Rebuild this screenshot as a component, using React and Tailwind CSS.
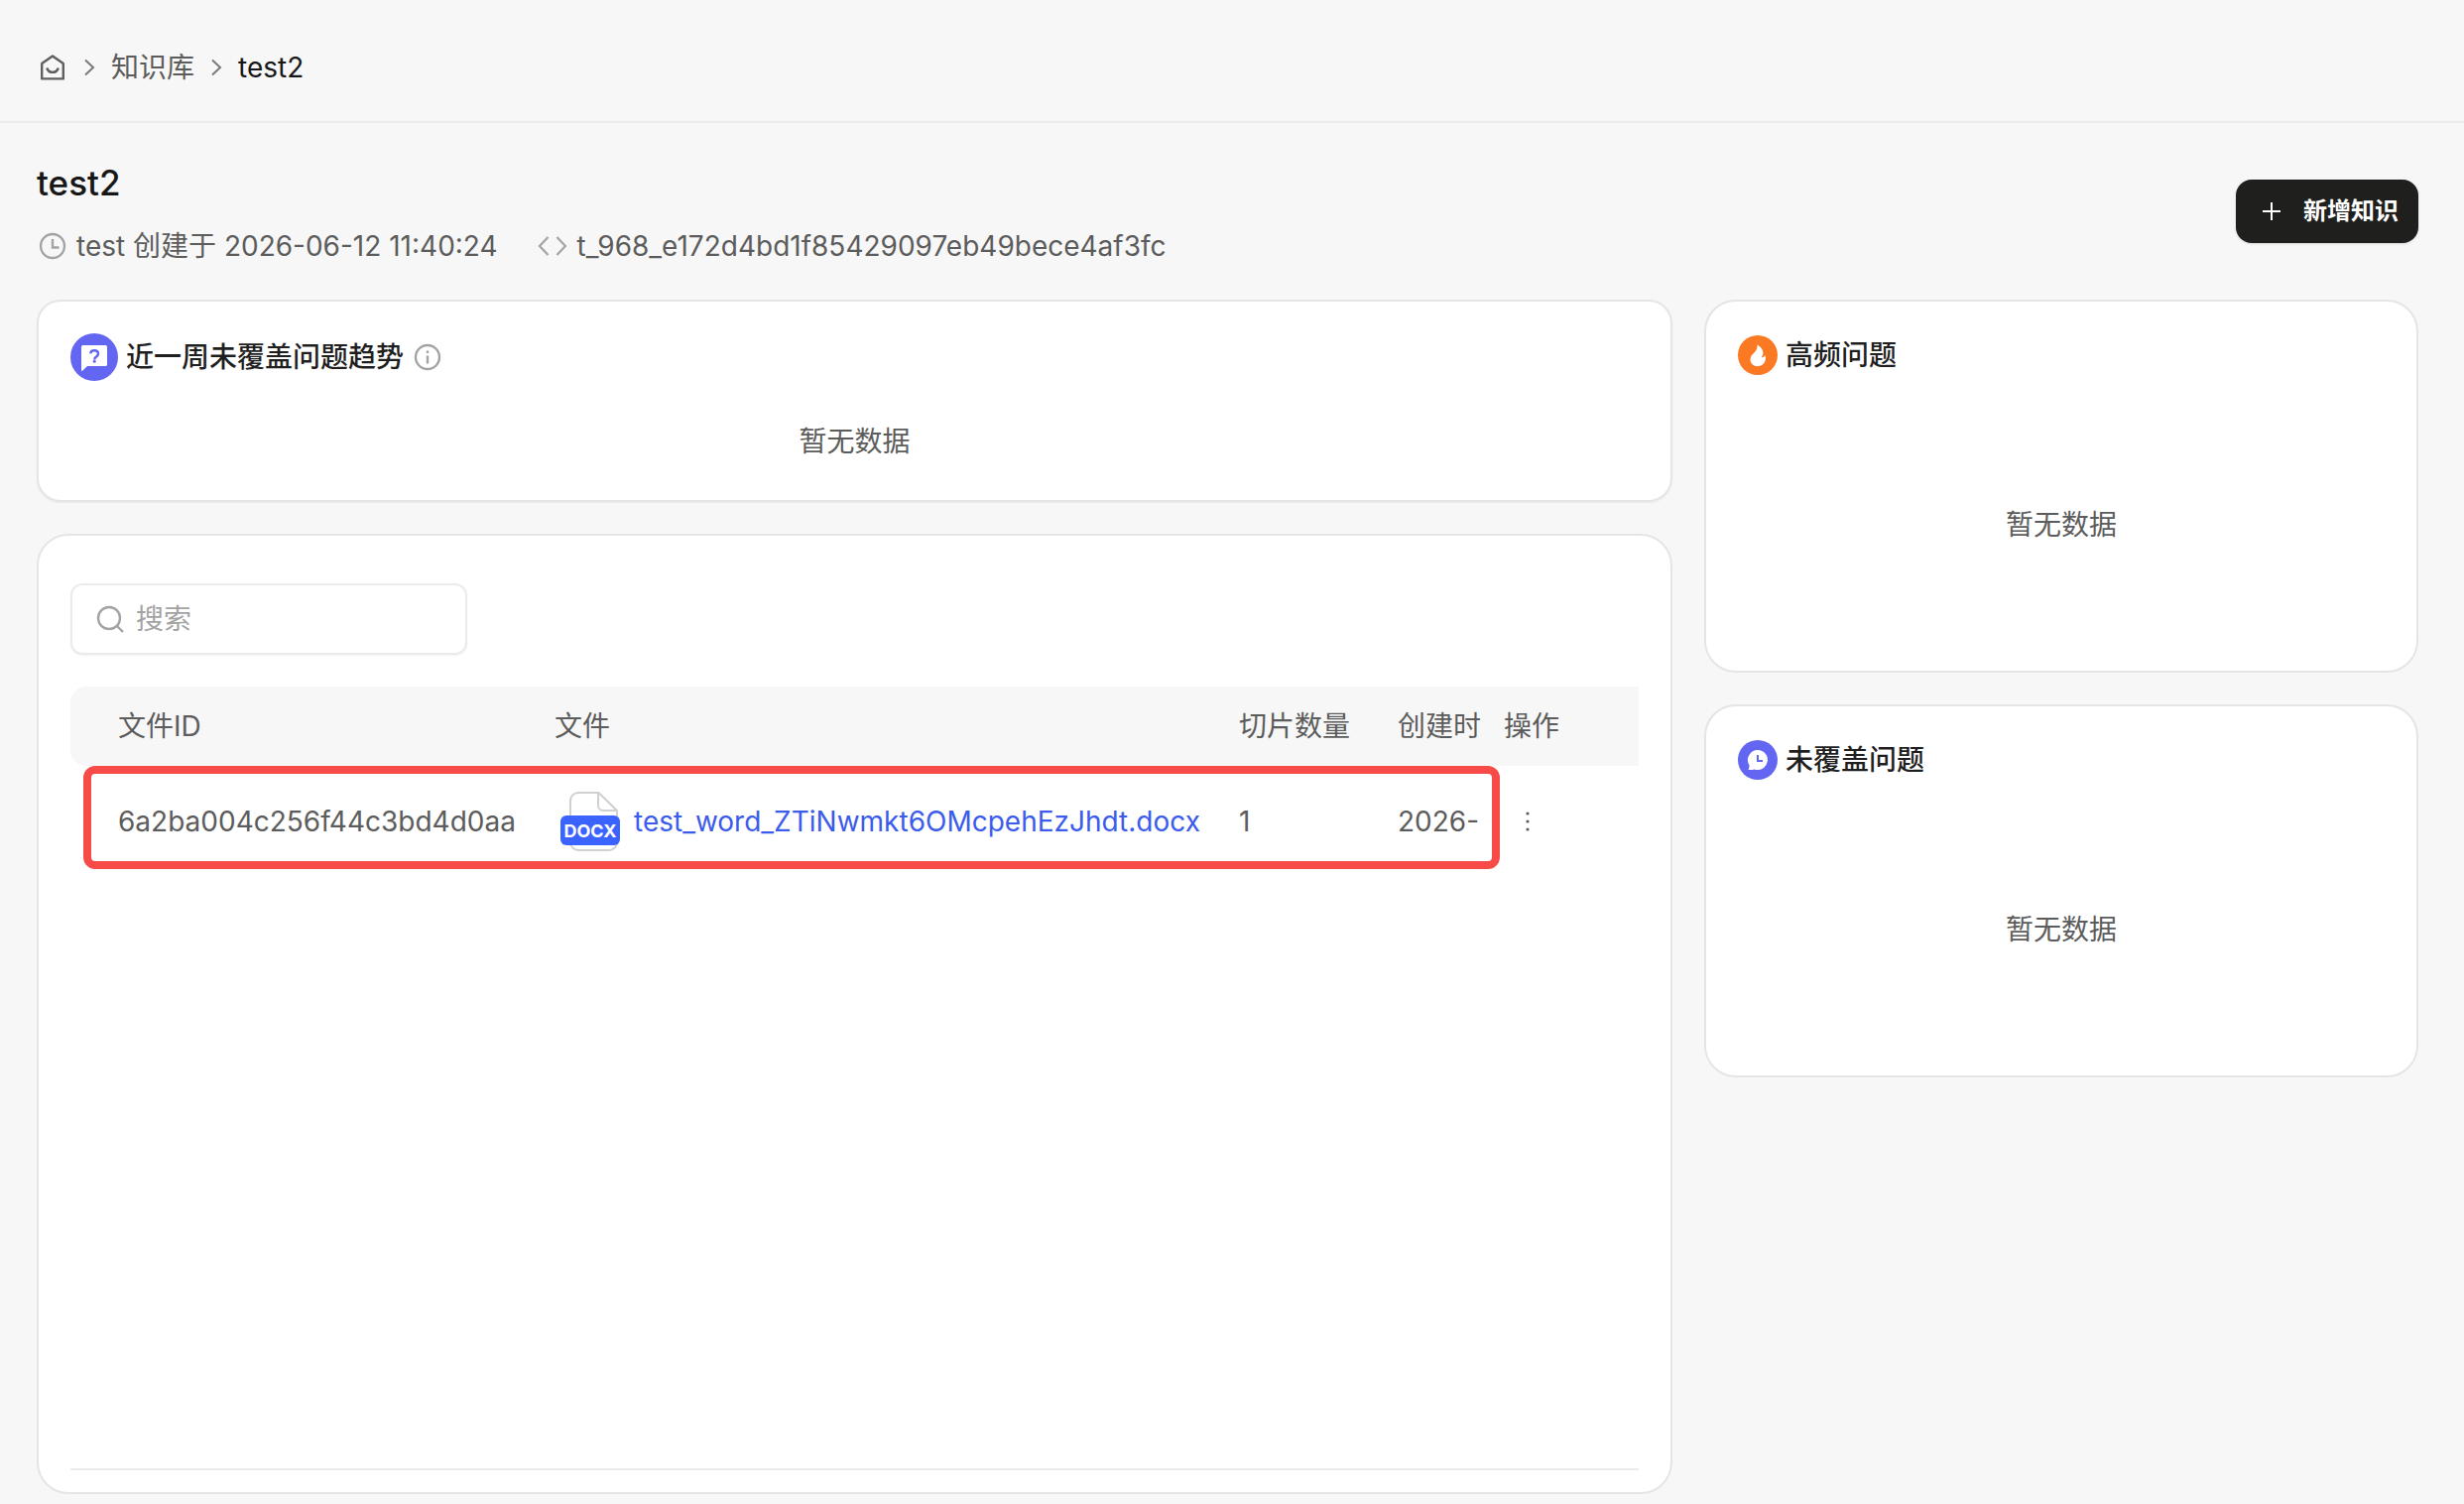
import { useState } from "react";

const files = [
  {
    id: "6a2ba004c256f44c3bd4d0aa",
    name: "test_word_ZTiNwmkt6OMcpehEzJhdt.docx",
    slices: 1,
    created: "2026-",
  },
];

function HomeIcon() {
  return (
    <svg width="26" height="28" viewBox="0 0 26 28" fill="none" stroke="#5f5f5f" strokeWidth="2.4">
      <path d="M2.2 10 13 2.4 23.8 10v15.4H2.2z" strokeLinejoin="round" />
      <path d="M7.2 14.5c1 3 3 4.4 5.8 4.4s4.8-1.4 5.8-4.4" />
    </svg>
  );
}

function ChevronIcon() {
  return (
    <svg width="12" height="18" viewBox="0 0 12 18" fill="none" stroke="#7a7a7a" strokeWidth="2">
      <path d="m2 1.5 8 7.5-8 7.5" />
    </svg>
  );
}

function ClockIcon() {
  return (
    <svg width="28" height="28" viewBox="0 0 28 28" fill="none" stroke="#a3a3a3" strokeWidth="2.4">
      <circle cx="14" cy="14" r="12" />
      <path d="M14 7v8.500h6.500" />
    </svg>
  );
}

function CodeIcon() {
  return (
    <svg width="30" height="20" viewBox="0 0 30 20" fill="none" stroke="#a3a3a3" strokeWidth="2.2">
      <path d="M10.5 1 2 10l8.5 9M19.5 1 28 10l-8.500 9" />
    </svg>
  );
}

function QuestionIcon() {
  return (
    <svg width="48" height="48" viewBox="0 0 48 48">
      <circle cx="24" cy="24" r="24" fill="#6366f1" />
      <path d="M12.5 12h23a1.5 1.5 0 0 1 1.5 1.5v18a1.5 1.5 0 0 1-1.5 1.5H17l-4.600 4.600c-.6.600-1.400.2-1.400-.6V13.500a1.500 1.500 0 0 1 1.500-1.500z" fill="#fff" />
      <path d="M20.2 20.4c.2-2 1.7-3.2 3.9-3.2 2.3 0 3.9 1.3 3.9 3.3 0 1.500-.7 2.300-1.900 3.100-1.300.9-1.900 1.500-1.900 3" fill="none" stroke="#6366f1" strokeWidth="2.4" />
      <circle cx="24.2" cy="28.2" r="1.5" fill="#6366f1" />
    </svg>
  );
}

function InfoIcon() {
  return (
    <svg width="28" height="28" viewBox="0 0 28 28" fill="none" stroke="#a3a3a3" strokeWidth="2.4">
      <circle cx="14" cy="14" r="12" />
      <path d="M14 12.5v8M14 7.5v2.5" />
    </svg>
  );
}

function FlameIcon() {
  return (
    <svg width="40" height="40" viewBox="0 0 40 40">
      <circle cx="20" cy="20" r="20" fill="#fb7922" />
      <path d="M19.5 9.5c3.2 1.9 5.9 4.8 5.9 8.2 0 2-.9 3.3-1.9 4.7 1.7-.1 3.2-.8 4-2.1 1.7 5.7-2 10.9-7.7 10.9-4.2 0-7.3-2.9-7.3-6.7 0-3.1 1.8-5 3.9-7 2.1-2.1 3.5-4.2 3.1-8z" fill="#fff" />
    </svg>
  );
}

function ChatClockIcon() {
  return (
    <svg width="40" height="40" viewBox="0 0 40 40">
      <circle cx="20" cy="20" r="20" fill="#6366f1" />
      <path d="M20 10a10 10 0 1 1-3.500 19.400c-1.800.6-3.900.7-6.200.5.900-1.200 1.300-2.600 1.200-4.600A10 10 0 0 1 20 10z" fill="#fff" />
      <path d="M20 15v6h5" fill="none" stroke="#6366f1" strokeWidth="2" />
    </svg>
  );
}

function SearchIcon() {
  return (
    <svg width="28" height="28" viewBox="0 0 28 28" fill="none" stroke="#a3a3a3" strokeWidth="2.4">
      <circle cx="13" cy="13" r="11" />
      <path d="m21 21 6 6" />
    </svg>
  );
}

function PlusIcon() {
  return (
    <svg width="20" height="20" viewBox="0 0 20 20" stroke="#fff" strokeWidth="2">
      <path d="M10 1v18M1 10h18" />
    </svg>
  );
}

function DocxIcon() {
  return (
    <svg width="60" height="60" viewBox="0 0 60 60" className="shrink-0">
      <path d="M18 1h20.5L57 19v32a8 8 0 0 1-8 8H18a8 8 0 0 1-8-8V9a8 8 0 0 1 8-8z" fill="#fff" stroke="#d0d0d0" strokeWidth="2" />
      <path d="M38 1v13a5 5 0 0 0 5 5h14" fill="none" stroke="#d0d0d0" strokeWidth="2" />
      <rect x="0" y="24" width="60" height="30" rx="6" fill="#3b63ff" />
      <text x="30" y="46" textAnchor="middle" fontSize="18" fontWeight="700" fill="#fff" fontFamily="Inter, sans-serif">
        DOCX
      </text>
    </svg>
  );
}

function MoreIcon() {
  return (
    <svg width="6" height="20" viewBox="0 0 6 20" fill="#5c5c5c">
      <circle cx="3" cy="2" r="1.6" />
      <circle cx="3" cy="10" r="1.6" />
      <circle cx="3" cy="18" r="1.6" />
    </svg>
  );
}

function SideCard({ icon, title }) {
  return (
    <section className="flex h-[376px] flex-col rounded-[32px] border-2 border-[#e5e5e5] bg-white px-8 pt-[34px]">
      <div className="flex items-center gap-2">
        {icon}
        <h2 className="leading-10 font-medium text-[#1f1f1f]">{title}</h2>
      </div>
      <p className="pt-[131px] text-center">暂无数据</p>
    </section>
  );
}

export default function App() {
  const [keyword, setKeyword] = useState("");
  const shown = files.filter((f) => f.name.includes(keyword));

  return (
    <div className="flex min-h-screen flex-col bg-[#f7f7f7] font-['Inter','Noto_Sans_CJK_SC',sans-serif] text-[28px] leading-10 text-[#5c5c5c]">
      <nav className="flex h-[124px] items-center border-b-2 border-[#ebebeb] pt-3.5 pl-10">
        <a href="#home" aria-label="首页">
          <HomeIcon />
        </a>
        <span className="ml-[18px]">
          <ChevronIcon />
        </span>
        <a href="#knowledge" className="ml-4">知识库</a>
        <span className="ml-4">
          <ChevronIcon />
        </span>
        <span className="ml-4 text-[#171717]">test2</span>
      </nav>

      <header className="flex items-center justify-between py-9 pr-[46px] pl-[37px]">
        <div className="flex flex-col gap-6">
          <h1 className="pt-0.5 text-[35px] leading-[44px] font-medium text-[#171717]">test2</h1>
          <div className="flex items-center leading-9">
            <span className="mr-2.5 ml-0.5">
              <ClockIcon />
            </span>
            <span>test 创建于 2026-06-12 11:40:24</span>
            <span className="mr-2.5 ml-10">
              <CodeIcon />
            </span>
            <span>t_968_e172d4bd1f85429097eb49bece4af3fc</span>
          </div>
        </div>
        <button className="flex h-16 w-[184px] items-center rounded-2xl bg-[#1f1f1e] pl-[26px] text-2xl font-bold text-white shadow-sm">
          <PlusIcon />
          <span className="ml-[22px]">新增知识</span>
        </button>
      </header>

      <main className="flex grow gap-8 pr-[46px] pb-2.5 pl-[37px]">
        <div className="flex min-w-0 grow flex-col gap-8">
          <section className="h-[204px] rounded-3xl border-2 border-[#e5e5e5] bg-white px-8 pt-8 shadow-xs">
            <div className="flex items-center">
              <QuestionIcon />
              <h2 className="ml-2 font-medium text-[#1f1f1f]">近一周未覆盖问题趋势</h2>
              <span className="ml-2.5">
                <InfoIcon />
              </span>
            </div>
            <p className="pt-[41px] text-center">暂无数据</p>
          </section>

          <section className="flex grow flex-col rounded-[32px] border-2 border-[#e5e5e5] bg-white px-8 pt-12 pb-[22px]">
            <label className="flex h-[72px] w-[400px] items-center rounded-xl border-2 border-[#ebebeb] pl-6 shadow-xs">
              <SearchIcon />
              <input
                type="text"
                aria-label="搜索"
                placeholder="搜索"
                className="ml-3 w-[300px] outline-none placeholder:text-[#a3a3a3]"
                value={keyword}
                onChange={(e) => setKeyword(e.target.value)}
              />
            </label>

            <div className="relative mt-8">
              <table className="w-full table-fixed text-left whitespace-nowrap">
                <colgroup>
                  <col className="w-[464px]" />
                  <col />
                  <col className="w-[160px]" />
                  <col className="w-[107px]" />
                  <col className="w-[160px]" />
                </colgroup>
                <thead>
                  <tr className="h-20">
                    <th className="rounded-l-2xl bg-[#f7f7f7] pl-12 font-normal">文件ID</th>
                    <th className="bg-[#f7f7f7] pl-6 font-normal">文件</th>
                    <th className="bg-[#f7f7f7] pl-6 font-normal">切片数量</th>
                    <th className="bg-[#f7f7f7] pl-6 font-normal">创建时</th>
                    <th className="bg-[#f7f7f7] pl-6 font-normal">操作</th>
                  </tr>
                </thead>
                <tbody>
                  {shown.map((file) => (
                    <tr key={file.id} className="h-28">
                      <td className="pl-12">{file.id}</td>
                      <td className="pl-[30px]">
                        <a href="#file" className="flex items-center gap-3.5 text-[#3b5bec]">
                          <DocxIcon />
                          {file.name}
                        </a>
                      </td>
                      <td className="pl-6">{file.slices}</td>
                      <td className="pl-6">{file.created}</td>
                      <td className="pl-[45px]">
                        <button className="flex items-center" aria-label="更多">
                          <MoreIcon />
                        </button>
                      </td>
                    </tr>
                  ))}
                </tbody>
              </table>
              {/* highlight around the file row */}
              <div className="pointer-events-none absolute top-20 right-[140px] left-[13px] h-[104px] rounded-xl border-8 border-[#f64b47]" />
            </div>

            <div className="mt-auto border-t-2 border-[#ebebeb]" />
          </section>
        </div>

        <aside className="flex w-[720px] shrink-0 flex-col gap-8">
          <SideCard icon={<FlameIcon />} title="高频问题" />
          <SideCard icon={<ChatClockIcon />} title="未覆盖问题" />
        </aside>
      </main>
    </div>
  );
}
